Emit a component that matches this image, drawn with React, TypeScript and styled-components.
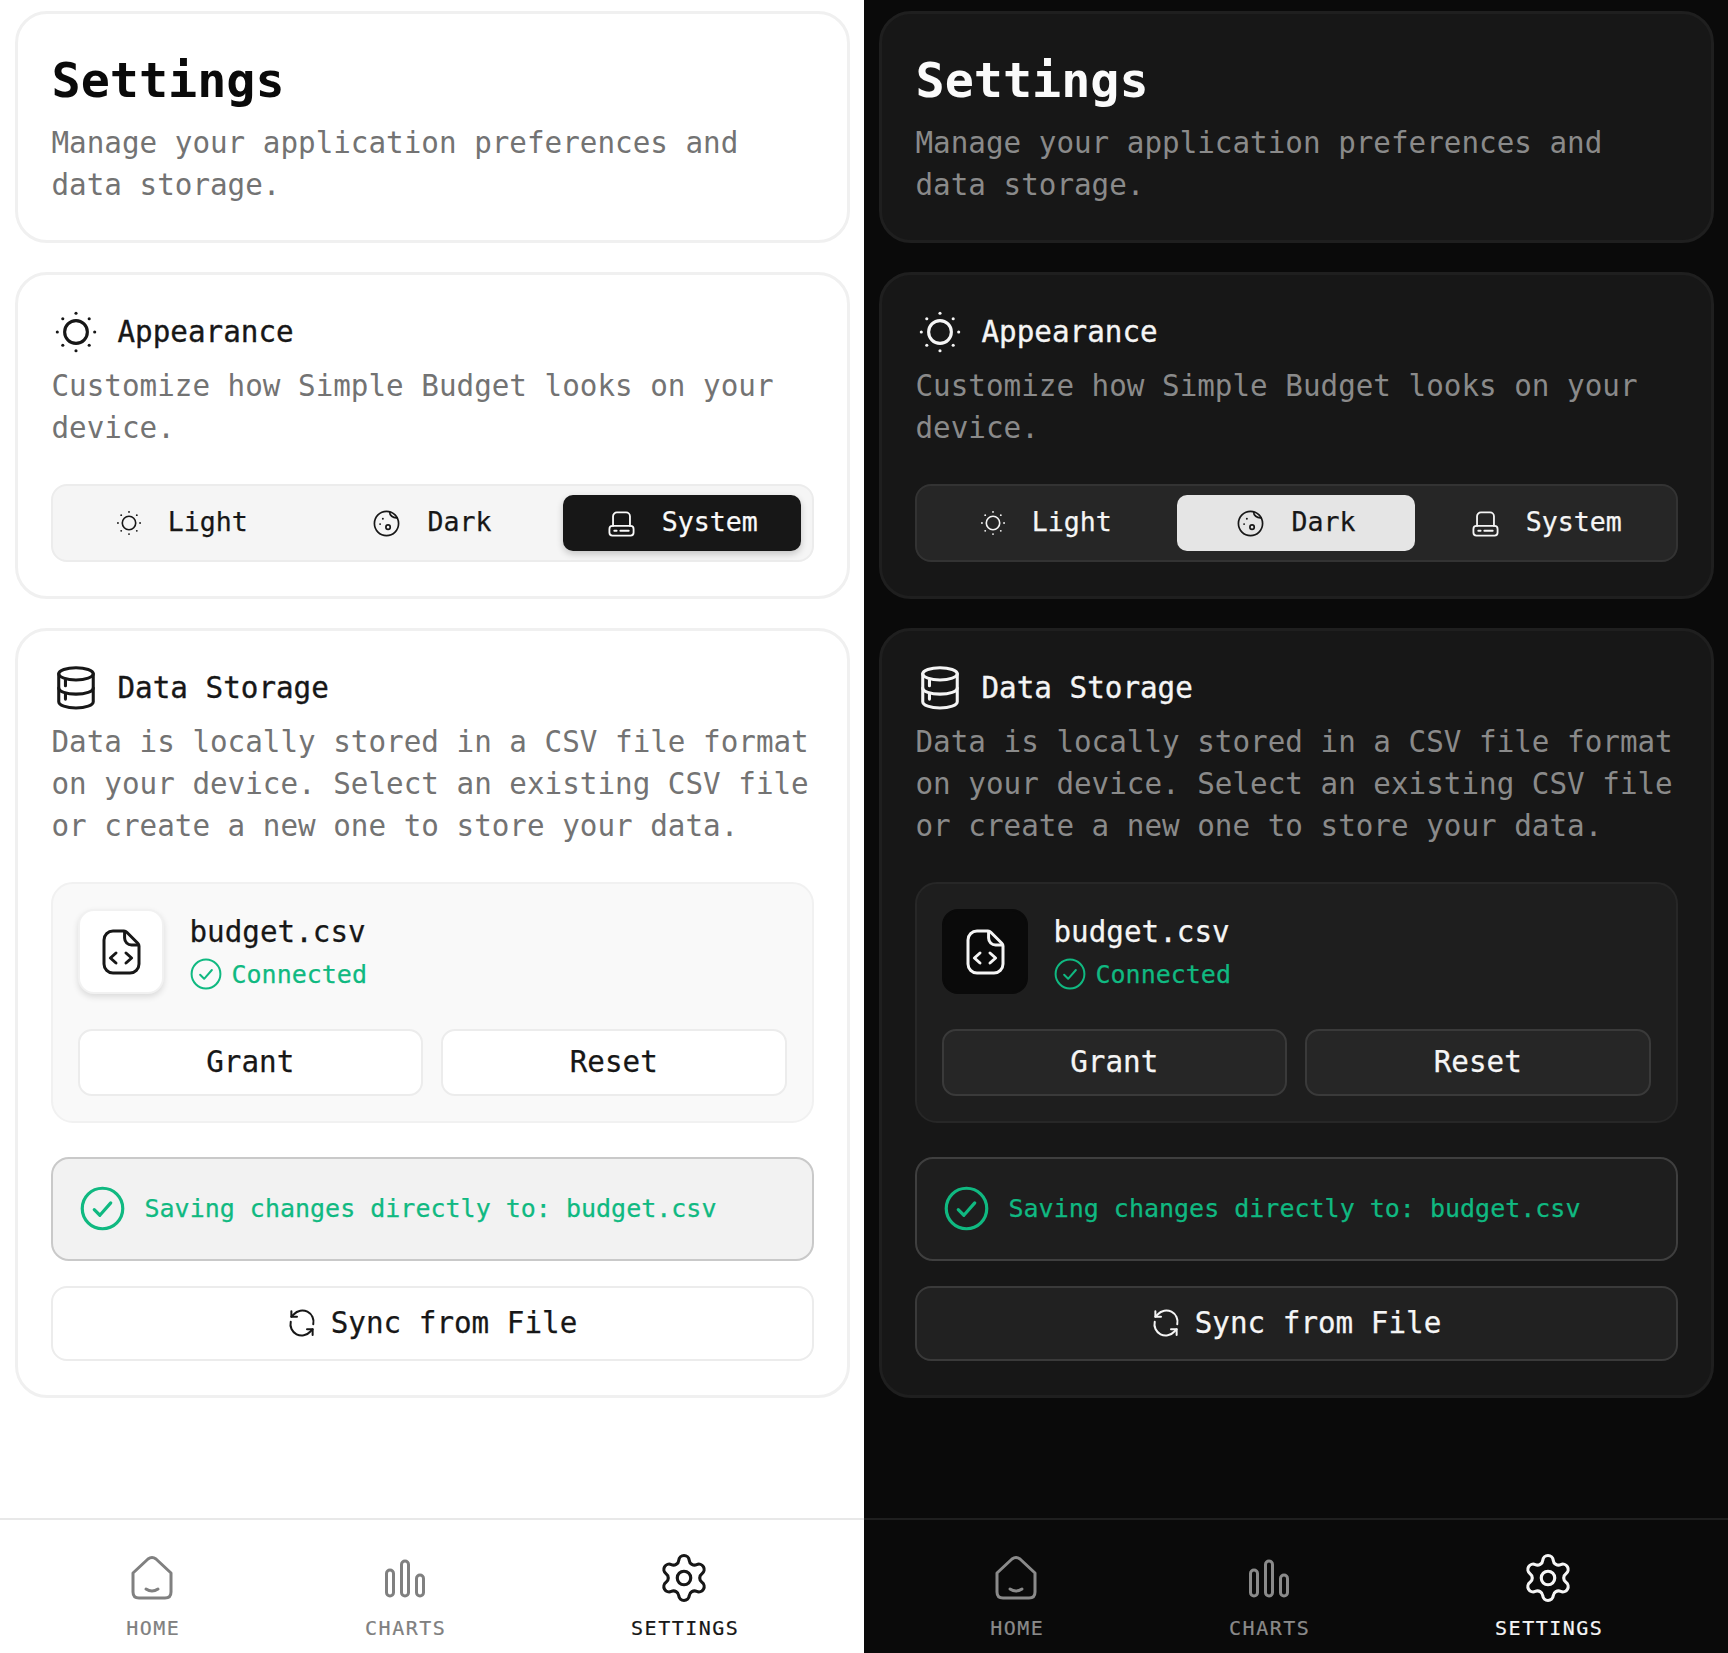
import React from "react";
import styled, { createGlobalStyle, ThemeProvider } from "styled-components";
import { Settings as GearIcon } from "lucide-react";

const light = {
  page: "#ffffff", card: "#ffffff", cardBorder: "#f0f0f0", title: "#0a0a0a", text: "#171717", muted: "#737373",
  segBg: "#f5f5f5", segBorder: "#ececec", boxBg: "#f9f9f9", boxBorder: "#f1f1f1", fileBg: "#ffffff", fileBorder: "#f1f1f1",
  fileShadow: "0 3px 6px rgba(0,0,0,.12)", btnBg: "#ffffff", btnBorder: "#ececec", statusBg: "#f2f2f2", statusBorder: "#c9c9c9",
  syncBg: "#ffffff", navBorder: "#e8e8e8", navMuted: "#808080", activeBg: "#171717", activeText: "#fafafa", activeShadow: "0 3px 7px rgba(0,0,0,.2)",
};
const dark = {
  page: "#0a0a0a", card: "#171717", cardBorder: "#1f1f1f", title: "#fafafa", text: "#f5f5f5", muted: "#8a8a8a",
  segBg: "#262626", segBorder: "#333333", boxBg: "#1e1e1e", boxBorder: "#272727", fileBg: "#0a0a0a", fileBorder: "#0a0a0a",
  fileShadow: "none", btnBg: "#262626", btnBorder: "#3a3a3a", statusBg: "#1e1e1e", statusBorder: "#3f3f3f",
  syncBg: "#212121", navBorder: "#1f1f1f", navMuted: "#8a8a8a", activeBg: "#e5e5e5", activeText: "#171717", activeShadow: "none",
};

const Global = createGlobalStyle`
  html, body { margin: 0; padding: 0; background: #fff; }
  * { box-sizing: border-box; }
`;

const Page = styled.div`
  display: grid;
  grid-template-columns: 864px 864px;
  width: 1728px;
  height: 1653px;
  overflow: hidden;
  font-family: "DejaVu Sans Mono", "Liberation Mono", monospace;
`;
const Panel = styled.main`
  display: flex;
  flex-direction: column;
  height: 1653px;
  background: ${(p) => p.theme.page};
`;
const Content = styled.div`
  display: flex;
  flex-direction: column;
  gap: 29px;
  padding: 11px 14.5px 0;
`;
const Card = styled.section`
  padding: 32px 33px 34px;
  background: ${(p) => p.theme.card};
  border: 3px solid ${(p) => p.theme.cardBorder};
  border-radius: 32px;
`;
const Title = styled.h1`
  margin: 0 0 8px;
  padding-left: 1px;
  font-size: 48.4px;
  line-height: 68px;
  font-weight: 700;
  color: ${(p) => p.theme.title};
`;
const Description = styled.p`
  margin: 0;
  padding-left: 1px;
  font-size: 29.25px;
  line-height: 42px;
  color: ${(p) => p.theme.muted};
`;
const SectionHeader = styled.div`
  display: flex;
  align-items: center;
  gap: 19px;
  height: 50px;
  margin-bottom: 8px;
  padding-left: 2px;
  color: ${(p) => p.theme.text};
`;
const IconSlot = styled.span`
  display: flex;
  align-items: center;
  justify-content: center;
  width: 46px;
  height: 46px;
  flex: none;
`;
const SectionTitle = styled.h2`
  margin: 0;
  font-size: 29.25px;
  font-weight: 400;
  -webkit-text-stroke: 0.35px currentColor;
`;
const Segments = styled.div`
  display: grid;
  grid-template-columns: repeat(3, 1fr);
  gap: 12px;
  margin-top: 35px;
  padding: 9px 10px;
  background: ${(p) => p.theme.segBg};
  border: 2px solid ${(p) => p.theme.segBorder};
  border-radius: 16px;
`;
const Segment = styled.button<{ $active?: boolean }>`
  display: flex;
  align-items: center;
  justify-content: center;
  gap: 26px;
  height: 56px;
  padding: 0;
  border: 0;
  border-radius: 10px;
  font: inherit;
  font-size: 26.6px;
  -webkit-text-stroke: 0.25px currentColor;
  color: ${(p) => (p.$active ? p.theme.activeText : p.theme.text)};
  background: ${(p) => (p.$active ? p.theme.activeBg : "transparent")};
  box-shadow: ${(p) => (p.$active ? p.theme.activeShadow : "none")};
`;
const SegmentLabel = styled.span`
  margin-bottom: 4px;
`;
const FileBox = styled.div`
  display: flex;
  flex-direction: column;
  gap: 35px;
  margin-top: 35px;
  padding: 25px;
  background: ${(p) => p.theme.boxBg};
  border: 2px solid ${(p) => p.theme.boxBorder};
  border-radius: 22px;
`;
const FileRow = styled.div`
  display: flex;
  gap: 26px;
`;
const FileIcon = styled.div`
  display: flex;
  align-items: center;
  justify-content: center;
  width: 86px;
  height: 85px;
  color: ${(p) => p.theme.text};
  background: ${(p) => p.theme.fileBg};
  border: 2px solid ${(p) => p.theme.fileBorder};
  border-radius: 16px;
  box-shadow: ${(p) => p.theme.fileShadow};
`;
const FileInfo = styled.div`
  display: flex;
  flex-direction: column;
  gap: 2px;
  padding-top: 2px;
`;
const FileName = styled.div`
  font-size: 29.25px;
  line-height: 42px;
  -webkit-text-stroke: 0.25px currentColor;
  color: ${(p) => p.theme.text};
`;
const Connected = styled.div`
  display: flex;
  align-items: center;
  gap: 10px;
  height: 38px;
  font-size: 25px;
  -webkit-text-stroke: 0.25px currentColor;
  color: #10b981;
`;
const ButtonRow = styled.div`
  display: grid;
  grid-template-columns: 1fr 1fr;
  gap: 18px;
`;
const OutlineButton = styled.button`
  display: flex;
  align-items: center;
  justify-content: center;
  height: 67px;
  padding: 0 0 2px;
  font: inherit;
  font-size: 29.25px;
  -webkit-text-stroke: 0.25px currentColor;
  color: ${(p) => p.theme.text};
  background: ${(p) => p.theme.btnBg};
  border: 2px solid ${(p) => p.theme.btnBorder};
  border-radius: 14px;
`;
const Status = styled.div`
  display: flex;
  align-items: center;
  gap: 20px;
  height: 104px;
  margin-top: 34px;
  padding: 0 27px 1px;
  font-size: 25px;
  -webkit-text-stroke: 0.25px currentColor;
  color: #10b981;
  background: ${(p) => p.theme.statusBg};
  border: 2px solid ${(p) => p.theme.statusBorder};
  border-radius: 18px;
`;
const SyncButton = styled.button`
  display: flex;
  align-items: center;
  justify-content: center;
  gap: 14px;
  width: 100%;
  height: 75px;
  margin-top: 25px;
  padding: 0 0 1px;
  font: inherit;
  font-size: 29.25px;
  -webkit-text-stroke: 0.25px currentColor;
  color: ${(p) => p.theme.text};
  background: ${(p) => p.theme.syncBg};
  border: 2px solid ${(p) => p.theme.btnBorder};
  border-radius: 16px;
`;
const Nav = styled.nav`
  display: flex;
  justify-content: space-around;
  align-items: flex-start;
  height: 135px;
  margin-top: auto;
  padding: 35px 33px 0;
  border-top: 2px solid ${(p) => p.theme.navBorder};
  background: ${(p) => p.theme.page};
`;
const NavItem = styled.div<{ $active?: boolean }>`
  display: flex;
  flex-direction: column;
  align-items: center;
  gap: 13px;
  color: ${(p) => (p.$active ? p.theme.text : p.theme.navMuted)};
`;
const NavIcon = styled.span`
  display: flex;
  align-items: center;
  justify-content: center;
  width: 46px;
  height: 46px;
  & > svg { flex: none; }
`;
const NavLabel = styled.span`
  font-size: 20px;
  line-height: 28px;
  letter-spacing: 1.5px;
  margin-right: -1.5px;
  -webkit-text-stroke: 0.2px currentColor;
`;

type IconProps = { size?: number; sw?: number };
const Svg = ({ size = 24, sw = 1.6, vb = 24, children }: IconProps & { vb?: number; children: React.ReactNode }) => (
  <svg width={size} height={size} viewBox={`0 0 ${vb} ${vb}`} fill="none" stroke="currentColor" strokeWidth={sw} strokeLinecap="round" strokeLinejoin="round" style={{ flex: "none" }}>
    {children}
  </svg>
);
const Sun = ({ size = 44, sw = 1.7 }: IconProps) => (
  <Svg size={size} sw={sw}>
    <circle cx="12" cy="12" r="6.2" />
    {[[12, 1.8], [19.2, 4.8], [22.2, 12], [19.2, 19.2], [12, 22.2], [4.8, 19.2], [1.8, 12], [4.8, 4.8]].map(([x, y]) => (
      <circle key={`${x}-${y}`} cx={x} cy={y} r="0.85" fill="currentColor" stroke="none" />
    ))}
  </Svg>
);
const Planet = () => (
  <Svg size={29} sw={1.4}>
    <circle cx="12" cy="12" r="10" />
    <path d="M14.6 2.4c0 2.8 2.6 5.2 6.2 4.9" />
    <circle cx="13.3" cy="15" r="1.8" />
    <circle cx="6.7" cy="12.5" r=".8" fill="currentColor" stroke="none" />
    <circle cx="9" cy="8" r=".8" fill="currentColor" stroke="none" />
  </Svg>
);
const Terminal = () => (
  <Svg size={29} sw={1.5}>
    <rect x="2" y="14" width="20" height="8" rx="2.5" />
    <path d="M5 14V6a3.2 3.2 0 0 1 3.2-3.2h7.6A3.2 3.2 0 0 1 19 6v8" />
    <path d="M6 18h2M11 18h7" />
  </Svg>
);
const Database = () => (
  <Svg size={46} sw={1.6}>
    <ellipse cx="12" cy="4.6" rx="9" ry="3.2" />
    <path d="M3 4.6v14.6c0 1.8 4 3.2 9 3.2s9-1.4 9-3.2V4.6" />
    <path d="M3 12c0 1.8 4 3.2 9 3.2s9-1.4 9-3.2" />
    <path d="M6.5 8v2.8M6.5 15v2.8" />
  </Svg>
);
const FileCode = () => (
  <Svg size={48} sw={1.5}>
    <path d="M8 1.5h5.5a2 2 0 0 1 1.4.6l5.5 5.5a2 2 0 0 1 .6 1.4V18a4.5 4.5 0 0 1-4.5 4.5H8A4.5 4.5 0 0 1 3.5 18V6A4.5 4.5 0 0 1 8 1.5Z" />
    <path d="M13.8 2v3a3.5 3.5 0 0 0 3.5 3.5h3.4" />
    <path d="M9.5 12.5 6.7 15l2.8 2.5M14.5 12.5l2.8 2.5-2.8 2.5" />
  </Svg>
);
const Check = ({ size = 32, sw = 1.5 }: IconProps) => (
  <Svg size={size} sw={sw}>
    <circle cx="12" cy="12" r="10.8" />
    <path d="m7.6 12.6 3 3 5.8-6.6" />
  </Svg>
);
const Sync = () => (
  <Svg size={30} sw={1.6}>
    <path d="M21 13a9 9 0 0 0-15.5-8L3.5 7" />
    <path d="M3.5 2.5V7H8" />
    <path d="M3 11a9 9 0 0 0 15.5 8l2-2" />
    <path d="M20.5 21.5V17H16" />
  </Svg>
);
const Home = () => (
  <Svg size={46} vb={46} sw={3}>
    <path d="M4 18 19 4q4-3 8 0l15 14v19q0 6-6 6H10q-6 0-6-6Z" />
    <path d="M17 34q6 4 12 0" />
  </Svg>
);
const Bars = () => (
  <Svg size={46} vb={46} sw={3}>
    <rect x="4.5" y="15" width="7" height="26" rx="3.5" />
    <rect x="19.5" y="6" width="7" height="35" rx="3.5" />
    <rect x="34.5" y="20" width="7" height="21" rx="3.5" />
  </Svg>
);

const Screen = ({ theme, mode }: { theme: typeof light; mode: "Dark" | "System" }) => (
  <ThemeProvider theme={theme}>
    <Panel>
      <Content>
        <Card>
          <Title>Settings</Title>
          <Description>Manage your application preferences and data storage.</Description>
        </Card>
        <Card>
          <SectionHeader>
            <IconSlot><Sun /></IconSlot>
            <SectionTitle>Appearance</SectionTitle>
          </SectionHeader>
          <Description>Customize how Simple Budget looks on your device.</Description>
          <Segments>
            <Segment><Sun size={26} sw={1.5} /><SegmentLabel>Light</SegmentLabel></Segment>
            <Segment $active={mode === "Dark"}><Planet /><SegmentLabel>Dark</SegmentLabel></Segment>
            <Segment $active={mode === "System"}><Terminal /><SegmentLabel>System</SegmentLabel></Segment>
          </Segments>
        </Card>
        <Card>
          <SectionHeader>
            <IconSlot><Database /></IconSlot>
            <SectionTitle>Data Storage</SectionTitle>
          </SectionHeader>
          <Description>Data is locally stored in a CSV file format on your device. Select an existing CSV file or create a new one to store your data.</Description>
          <FileBox>
            <FileRow>
              <FileIcon><FileCode /></FileIcon>
              <FileInfo>
                <FileName>budget.csv</FileName>
                <Connected><Check />Connected</Connected>
              </FileInfo>
            </FileRow>
            <ButtonRow>
              <OutlineButton>Grant</OutlineButton>
              <OutlineButton>Reset</OutlineButton>
            </ButtonRow>
          </FileBox>
          <Status>
            <Check size={45} sw={1.7} />
            Saving changes directly to: budget.csv
          </Status>
          <SyncButton><Sync />Sync from File</SyncButton>
        </Card>
      </Content>
      <Nav>
        <NavItem><NavIcon><Home /></NavIcon><NavLabel>HOME</NavLabel></NavItem>
        <NavItem><NavIcon><Bars /></NavIcon><NavLabel>CHARTS</NavLabel></NavItem>
        <NavItem $active><NavIcon><GearIcon size={54} strokeWidth={1.4} /></NavIcon><NavLabel>SETTINGS</NavLabel></NavItem>
      </Nav>
    </Panel>
  </ThemeProvider>
);

export default function App() {
  return (
    <>
      <Global />
      <Page>
        <Screen theme={light} mode="System" />
        <Screen theme={dark} mode="Dark" />
      </Page>
    </>
  );
}
